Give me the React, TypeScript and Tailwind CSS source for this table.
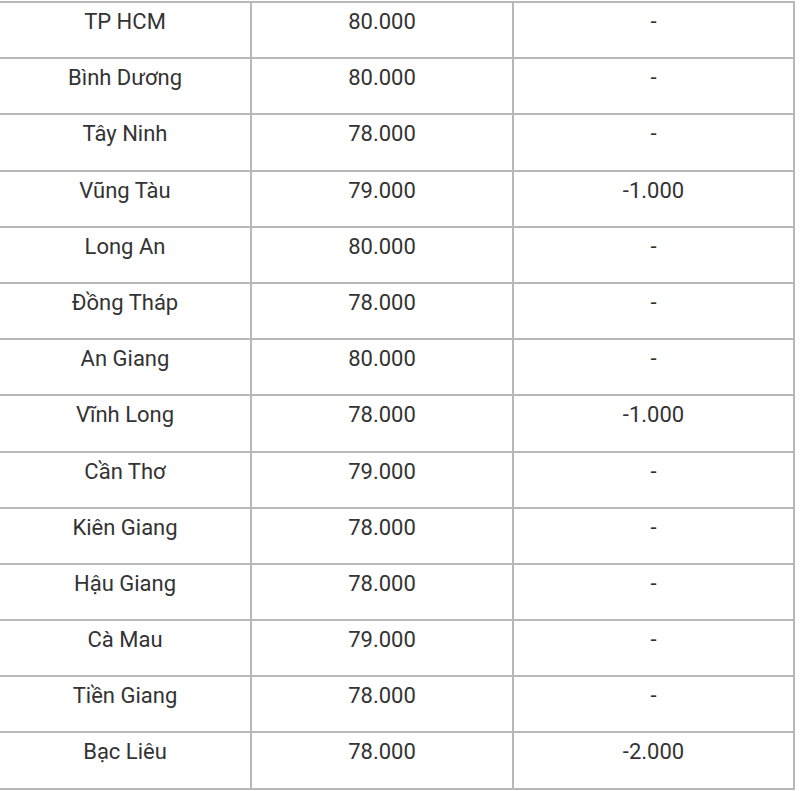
const rows: [string, string, string][] = [
  ["TP HCM", "80.000", "-"],
  ["Bình Dương", "80.000", "-"],
  ["Tây Ninh", "78.000", "-"],
  ["Vũng Tàu", "79.000", "-1.000"],
  ["Long An", "80.000", "-"],
  ["Đồng Tháp", "78.000", "-"],
  ["An Giang", "80.000", "-"],
  ["Vĩnh Long", "78.000", "-1.000"],
  ["Cần Thơ", "79.000", "-"],
  ["Kiên Giang", "78.000", "-"],
  ["Hậu Giang", "78.000", "-"],
  ["Cà Mau", "79.000", "-"],
  ["Tiền Giang", "78.000", "-"],
  ["Bạc Liêu", "78.000", "-2.000"],
];

export default function App() {
  return (
    <div className="min-h-screen bg-white pt-[1px] text-[#333333]" style={{ fontFamily: "Roboto, 'Liberation Sans', sans-serif" }}>
      <div className="w-[795px] border-t-2 border-[#b8b8b8]">
        {rows.map((r, i) => (
          <div key={i} className="grid grid-cols-[252px_262px_281px] h-[56.2px] border-b-2 border-[#b8b8b8]">
            <div className="border-r-2 border-[#b8b8b8] text-center text-[22px] leading-[28px] pt-[5px]">{r[0]}</div>
            <div className="border-r-2 border-[#b8b8b8] text-center text-[22px] leading-[28px] pt-[5px]">{r[1]}</div>
            <div className="border-r-2 border-[#b8b8b8] text-center text-[22px] leading-[28px] pt-[5px]">{r[2]}</div>
          </div>
        ))}
      </div>
    </div>
  );
}
